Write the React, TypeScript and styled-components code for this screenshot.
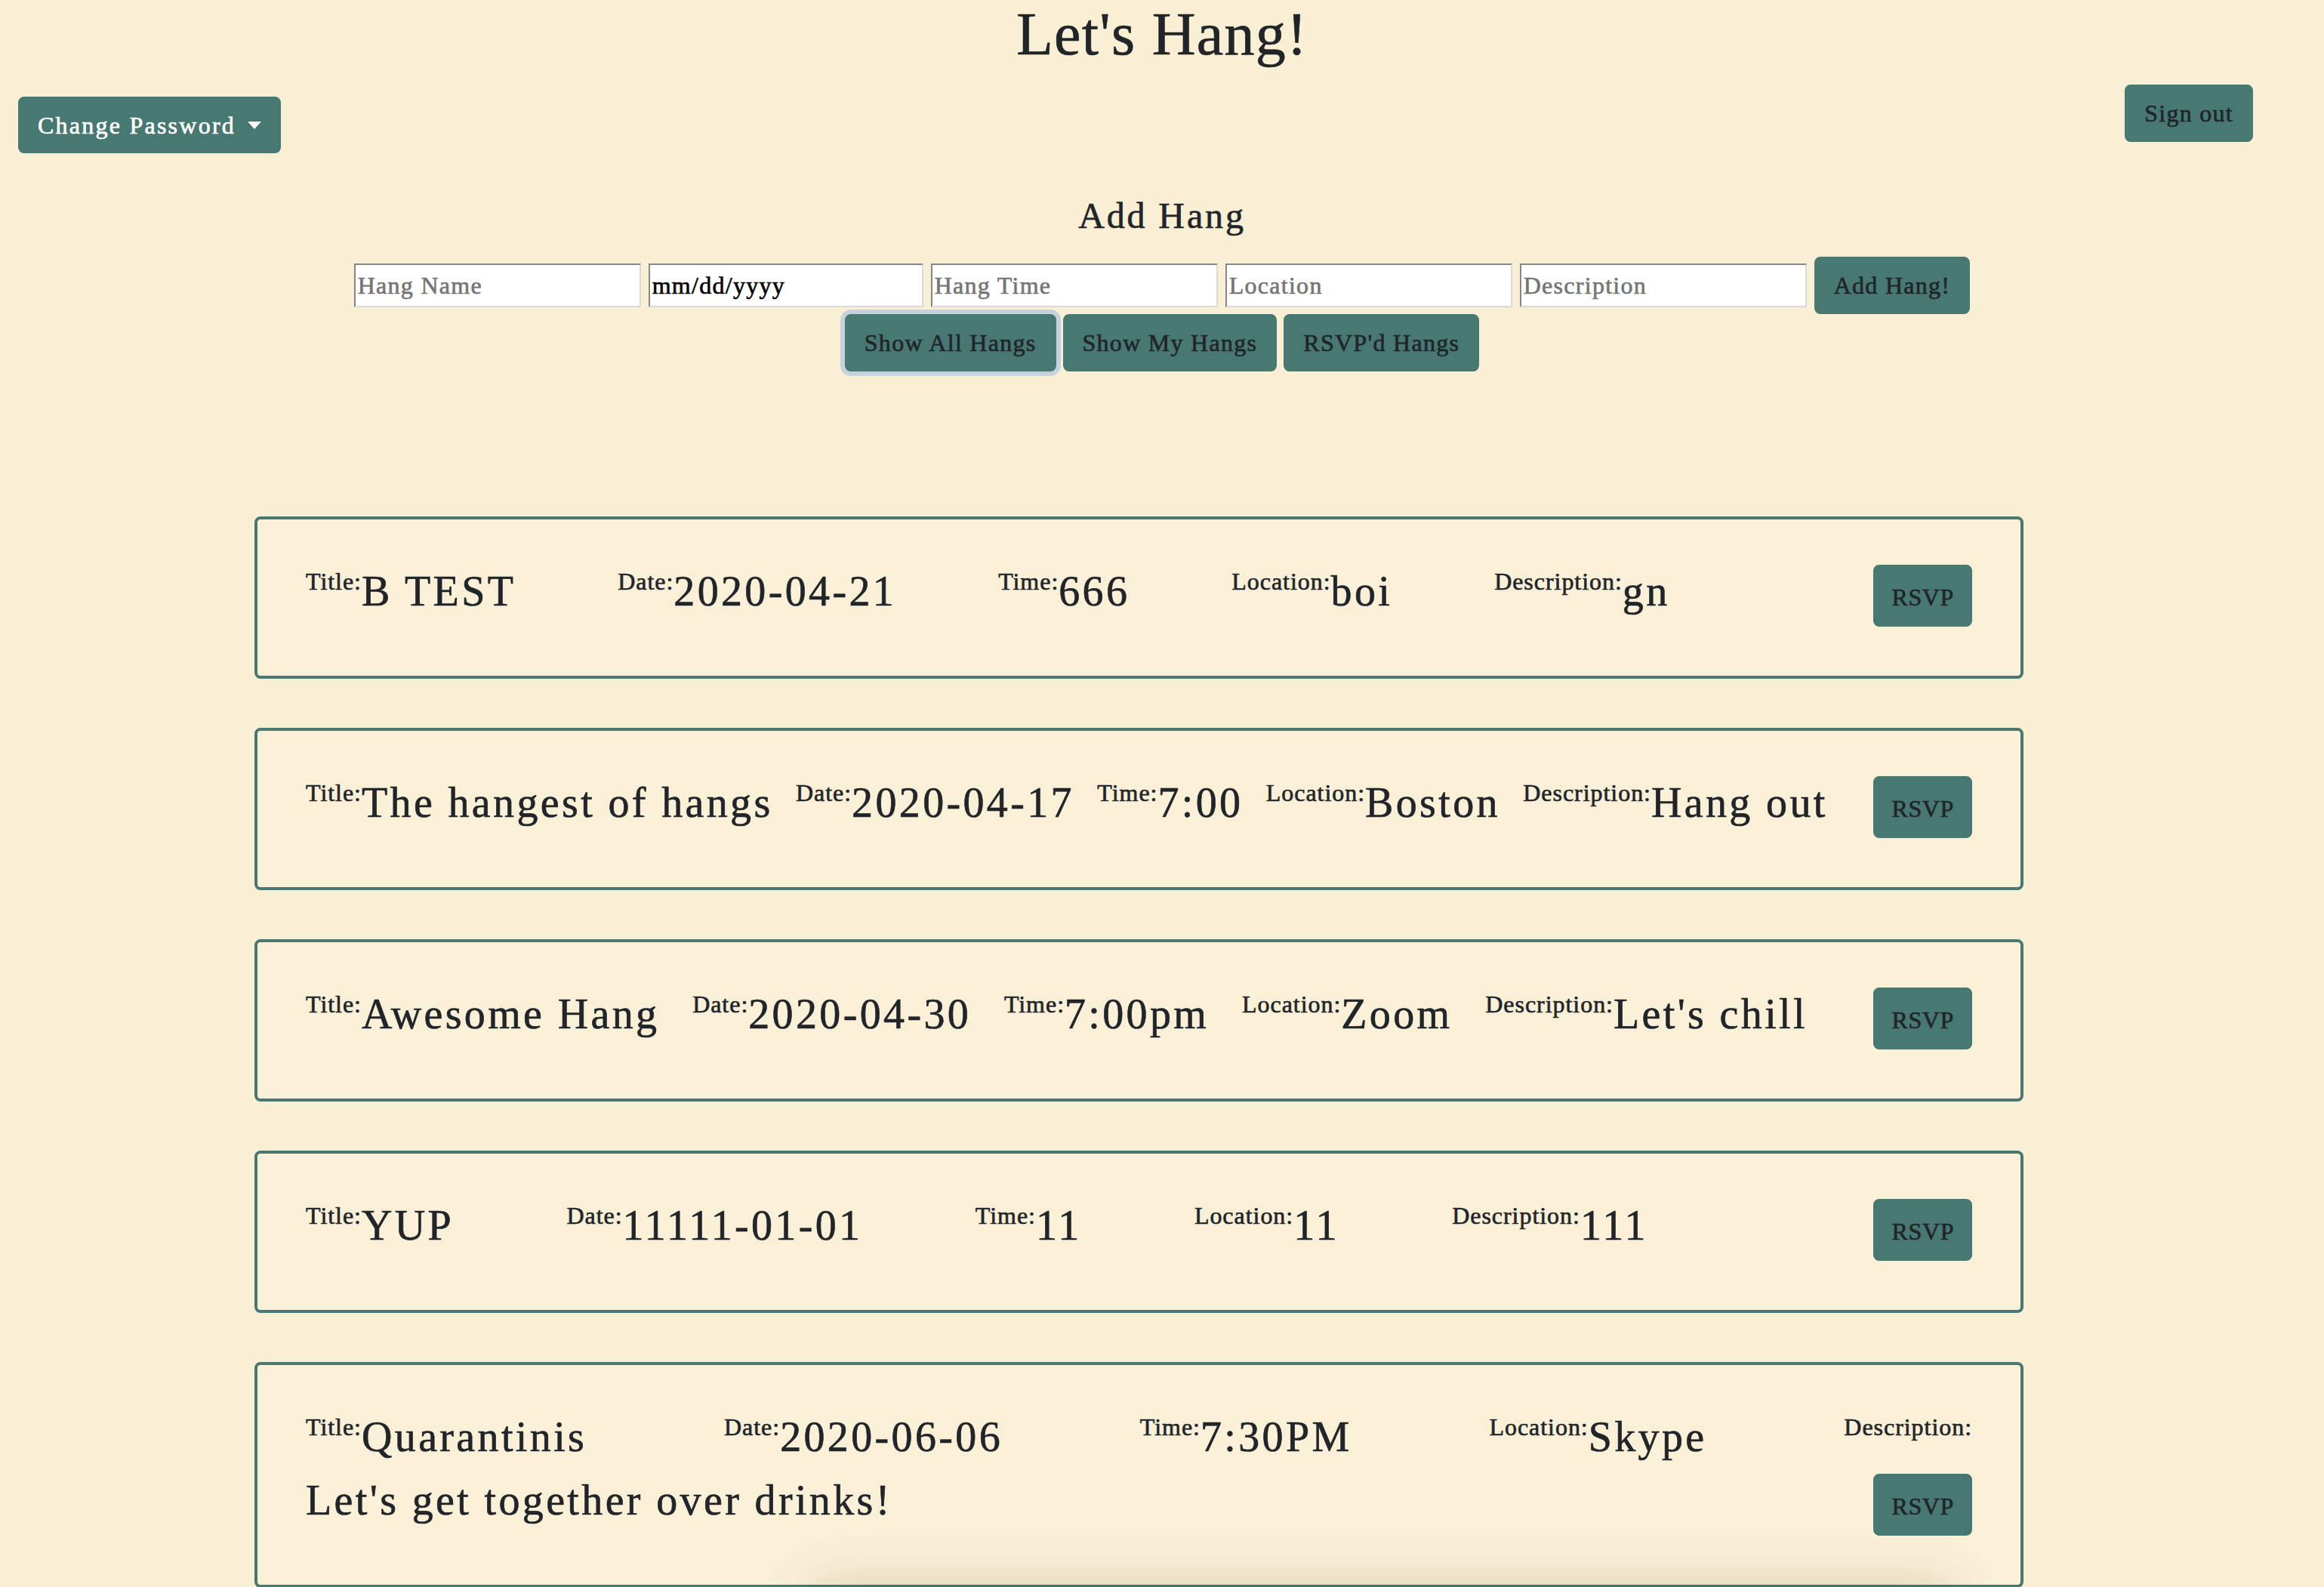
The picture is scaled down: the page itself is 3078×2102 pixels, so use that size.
import React, { Fragment } from 'react';
import styled, { createGlobalStyle } from 'styled-components';

interface Hang {
  title: string;
  date: string;
  time: string;
  location: string;
  description: string;
}

const hangs: Hang[] = [
  { title: 'B TEST', date: '2020-04-21', time: '666', location: 'boi', description: 'gn' },
  { title: 'The hangest of hangs', date: '2020-04-17', time: '7:00', location: 'Boston', description: 'Hang out' },
  { title: 'Awesome Hang', date: '2020-04-30', time: '7:00pm', location: 'Zoom', description: "Let's chill" },
  { title: 'YUP', date: '11111-01-01', time: '11', location: '11', description: '111' },
  { title: 'Quarantinis', date: '2020-06-06', time: '7:30PM', location: 'Skype', description: "Let's get together over drinks!" }
];

const teal = '#477872';
const ink = '#212529';

const GlobalStyle = createGlobalStyle`
  html, body {
    margin: 0;
    background: #f9efd5;
  }
  body {
    font-family: "Liberation Serif", "DejaVu Serif", serif;
    font-size: 32px;
    letter-spacing: 0.04em;
    color: ${ink};
    -webkit-text-stroke: 0.02em currentColor;
  }
  * { box-sizing: border-box; }
`;

const Page = styled.div`
  min-height: 2102px;
`;

const Heading = styled.h1`
  margin: 0;
  font-size: 80px;
  font-weight: 400;
  line-height: 90px;
  text-align: center;
`;

const Toolbar = styled.div`
  display: flex;
  justify-content: space-between;
  align-items: flex-start;
  padding: 22px 94px 0 24px;
`;

const Button = styled.button<{ $light?: boolean; $focused?: boolean }>`
  font-family: inherit;
  font-size: 32px;
  letter-spacing: 0.04em;
  line-height: 48px;
  height: 76px;
  padding: 12px 24px;
  border: 2px solid ${teal};
  border-radius: 8px;
  background: ${teal};
  color: ${p => (p.$light ? '#ffffff' : ink)};
  -webkit-text-stroke: 0.02em currentColor;
  box-shadow: ${p => (p.$focused ? '0 0 0 6px #c6d3dc' : 'none')};
  white-space: nowrap;
  cursor: pointer;
`;

const DropdownButton = styled(Button)`
  margin-top: 16px;
  height: 75px;
  display: inline-flex;
  align-items: center;
  letter-spacing: 0.07em;

  &::after {
    content: '';
    display: inline-block;
    margin-left: 16px;
    border-top: 10px solid #ffffff;
    border-left: 9.5px solid transparent;
    border-right: 9.5px solid transparent;
  }
`;

const FormSection = styled.section`
  display: flex;
  flex-direction: column;
  align-items: center;
`;

const SubHeading = styled.h4`
  margin: 54px 0 25px;
  font-size: 48px;
  font-weight: 400;
  line-height: 58px;
  letter-spacing: 0.06em;
`;

const Row = styled.div<{ $gap: number }>`
  display: flex;
  align-items: center;
  gap: ${p => p.$gap}px;
`;

const Field = styled.input<{ $width?: number }>`
  width: ${p => p.$width ?? 380}px;
  height: 58px;
  padding: 1px 3px;
  font-family: inherit;
  font-size: 32px;
  letter-spacing: 0.04em;
  color: #000000;
  background: #ffffff;
  border: 2px inset #dadada;
  outline: none;
  -webkit-text-stroke: 0.02em currentColor;

  &::placeholder {
    color: #757575;
    -webkit-text-stroke: 0.02em #757575;
  }
`;

const List = styled.div`
  margin: 192px 0 0 337px;
  width: 2343px;
`;

const Card = styled.div`
  margin-bottom: 65px;
  padding: 53px 64px 65px;
  border: 4px solid ${teal};
  border-radius: 8px;
  background: #faf0d8;
  font-size: 56px;
  line-height: 84px;
  text-align: justify;
  text-align-last: justify;
`;

const Label = styled.span`
  display: inline-block;
  font-size: 32px;
  line-height: 1;
  letter-spacing: 0.03em;
  vertical-align: 21px;
`;

const Value = styled.span`
  display: inline-block;
  letter-spacing: 0.06em;
  text-align: left;
  text-align-last: left;
`;

const Spacer = styled.span`
  display: inline-block;
  width: 0;
`;

const RsvpButton = styled(Button)`
  height: 82px;
  padding: 17px 22px;
  vertical-align: baseline;
  letter-spacing: 0.02em;
`;

const Shade = styled.div`
  position: fixed;
  left: 1080px;
  top: 2112px;
  width: 1500px;
  height: 200px;
  background: #f9efd5;
  box-shadow: 0 -6px 70px rgba(90, 70, 30, 0.24);
`;

const fieldsOf = (h: Hang) => [
  ['Title', h.title],
  ['Date', h.date],
  ['Time', h.time],
  ['Location', h.location],
  ['Description', h.description]
];

const HangCard = ({ hang }: { hang: Hang }) => (
  <Card>
    {fieldsOf(hang).map(([label, value]) => (
      <Fragment key={label}>
        <Label>{label}:</Label>
        <Value>{value}</Value>{' '}
      </Fragment>
    ))}
    <Spacer />{' '}
    <RsvpButton>RSVP</RsvpButton>
  </Card>
);

export default function App() {
  return (
    <Page>
      <GlobalStyle />
      <Heading>Let's Hang!</Heading>
      <Toolbar>
        <DropdownButton $light>Change Password</DropdownButton>
        <Button>Sign out</Button>
      </Toolbar>
      <FormSection>
        <SubHeading>Add Hang</SubHeading>
        <Row $gap={10}>
          <Field placeholder="Hang Name" />
          <Field $width={364} defaultValue="mm/dd/yyyy" />
          <Field placeholder="Hang Time" />
          <Field placeholder="Location" />
          <Field placeholder="Description" />
          <Button>Add Hang!</Button>
        </Row>
        <Row $gap={9}>
          <Button $focused>Show All Hangs</Button>
          <Button>Show My Hangs</Button>
          <Button>RSVP'd Hangs</Button>
        </Row>
      </FormSection>
      <List>
        {hangs.map((h, i) => (
          <HangCard key={i} hang={h} />
        ))}
      </List>
      <Shade />
    </Page>
  );
}
